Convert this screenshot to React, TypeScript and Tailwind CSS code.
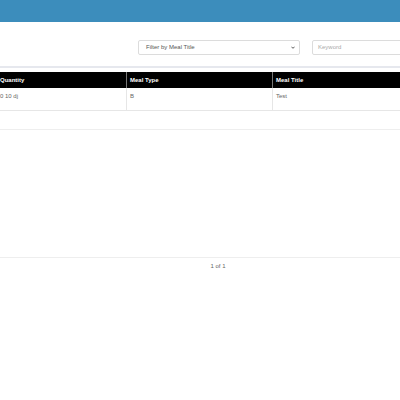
import React from "react";

const font = { fontFamily: '"Liberation Sans", Arial, sans-serif' };

function Chevron() {
  return (
    <svg width="4" height="3" viewBox="0 0 10 7" className="shrink-0">
      <path d="M1 1.5 L5 5.5 L9 1.5" fill="none" stroke="#444" strokeWidth="2.2" />
    </svg>
  );
}

export default function App() {
  const rows = [{ qty: "0 10 dj", type: "B", title: "Test" }];
  return (
    <div className="w-[400px] h-[400px] overflow-hidden bg-white" style={font}>
      <div className="h-[22px] bg-[#3c8dbc]" />

      <div className="flex items-center pt-[18px] gap-[12px] pl-[138px]">
        <div className="w-[162px] h-[15px] shrink-0 border border-[#dcdcdc] rounded-[2px] flex items-center justify-between pl-[7px] pr-[4px] text-[6px] text-[#555]">
          <span>Filter by Meal Title</span>
          <Chevron />
        </div>
        <div className="w-[100px] h-[15px] shrink-0 border border-[#dcdcdc] rounded-[2px] flex items-center pl-[5px] text-[6px] text-[#aaa]">
          Keyword
        </div>
      </div>

      <div className="mt-[11px] h-[2px] bg-[#e6e8ee]" />

      <div className="mt-[4px] w-[480px]">
        <div className="grid grid-cols-[127px_146px_1fr] h-[16px] bg-black text-white font-bold text-[6px]">
          <div className="flex items-center border-r border-[#777]">Quantity</div>
          <div className="flex items-center pl-[3px] border-r border-[#777]">Meal Type</div>
          <div className="flex items-center pl-[3px]">Meal Title</div>
        </div>
        {rows.map((r) => (
          <div
            key={r.title}
            className="grid grid-cols-[127px_146px_1fr] h-[23px] border-b border-[#e6e6e6] text-[6px] text-[#666]"
          >
            <div className="pt-[4px] border-r border-[#e6e6e6]">{r.qty}</div>
            <div className="pt-[4px] pl-[3px] border-r border-[#e6e6e6]">{r.type}</div>
            <div className="pt-[4px] pl-[3px]">{r.title}</div>
          </div>
        ))}
        <div className="h-[19px] border-b border-[#eeeeee]" />
      </div>

      <div className="mt-[127px] border-t border-[#eeeeee] w-[436px]">
        <div className="text-center pt-[4px] text-[6px] text-[#666]">1 of 1</div>
      </div>
    </div>
  );
}
